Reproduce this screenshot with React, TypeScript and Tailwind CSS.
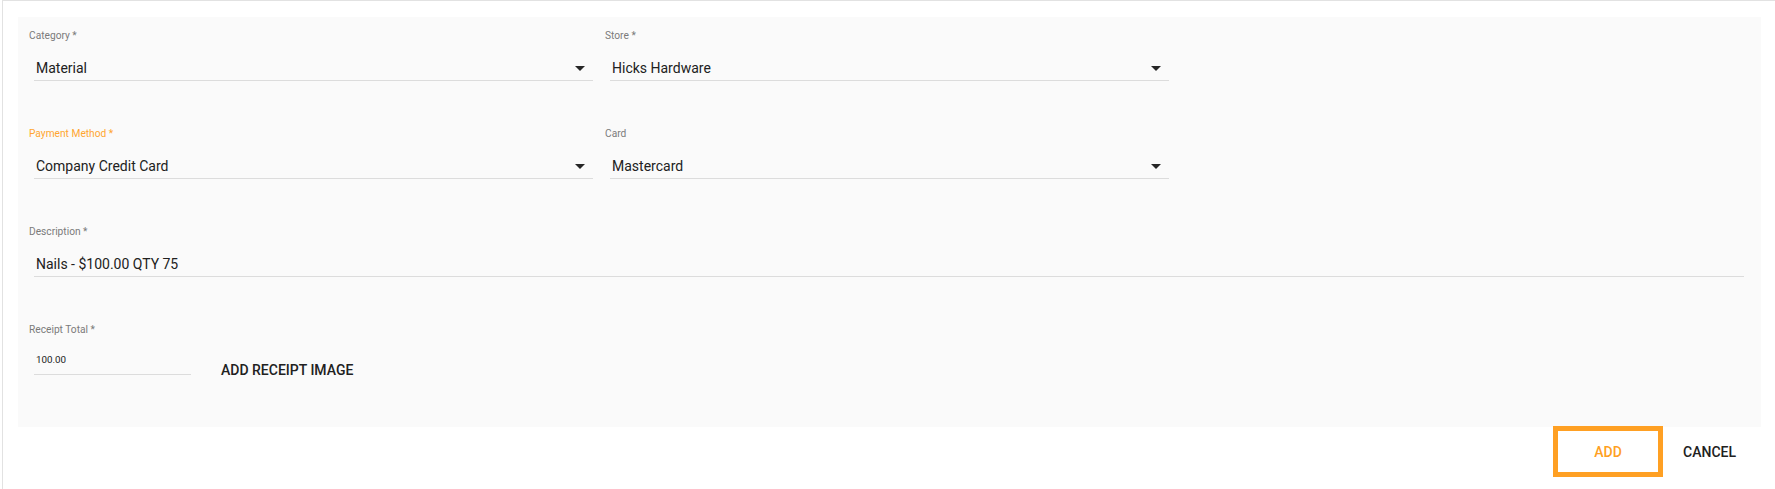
import type { ReactNode } from "react";

const fontStack = "font-['Roboto','Liberation_Sans',sans-serif]";

function DropArrow() {
  return (
    <svg width="10" height="5" viewBox="0 0 10 5" aria-hidden="true" className="shrink-0">
      <path d="M0 0 L5 5 L10 0 Z" fill="#262626" />
    </svg>
  );
}

function Field({
  label,
  accent = false,
  children,
  inputClass = "",
}: {
  label: string;
  accent?: boolean;
  children: ReactNode;
  inputClass?: string;
}) {
  return (
    <div className="flex flex-col">
      <label
        className={`text-[10.2px] leading-[12px] ${accent ? "text-[#ffa630]" : "text-[#7a7a7a]"}`}
      >
        {label}
      </label>
      <div
        className={`mt-[16px] ml-[5px] flex h-[23px] border-b border-[#dcdcdc] pl-[2px] ${inputClass}`}
      >
        {children}
      </div>
    </div>
  );
}

function SelectField({ label, value, accent }: { label: string; value: string; accent?: boolean }) {
  return (
    <Field label={label} accent={accent} inputClass="items-start justify-between pr-[8px]">
      <span className="text-[14px] leading-[20px] text-[#212121]">{value}</span>
      <span className="mt-[8px]">
        <DropArrow />
      </span>
    </Field>
  );
}

export default function App() {
  return (
    <div className={`min-h-[489px] bg-white ${fontStack}`}>
      <div className="ml-[2px] min-h-[489px] border-l border-t border-[#e2e2e2] pl-[15px] pt-[16px]">
        <div className="mr-[14px] flex flex-col gap-[47px] bg-[#fafafa] pb-[47px] pl-[11px] pr-[17px] pt-[13px]">
          <div className="grid grid-cols-[564px_564px] gap-x-[12px]">
            <SelectField label="Category *" value="Material" />
            <SelectField label="Store *" value="Hicks Hardware" />
          </div>

          <div className="grid grid-cols-[564px_564px] gap-x-[12px]">
            <SelectField label="Payment Method *" value="Company Credit Card" accent />
            <SelectField label="Card" value="Mastercard" />
          </div>

          <Field label="Description *" inputClass="items-start">
            <span className="text-[14px] leading-[20px] text-[#212121]">Nails - $100.00 QTY 75</span>
          </Field>

          <div className="flex items-start">
            <div className="w-[162px]">
              <Field label="Receipt Total *" inputClass="items-start">
                <span className="text-[9.8px] leading-[16px] text-[#212121]">100.00</span>
              </Field>
            </div>
            <button
              type="button"
              className="ml-[30px] mt-[36px] text-[14px] font-medium leading-[20px] text-[#212121]"
            >
              ADD RECEIPT IMAGE
            </button>
          </div>
        </div>

        <div className="flex items-center justify-end gap-[20px] pr-[39px]">
          <button
            type="button"
            className="-mt-[1px] flex h-[51px] w-[110px] items-center justify-center border-[5px] border-[#ffa023] text-[14px] font-medium leading-[20px] text-[#ffa023]"
          >
            ADD
          </button>
          <button type="button" className="text-[14px] font-medium leading-[20px] text-[#212121]">
            CANCEL
          </button>
        </div>
      </div>
    </div>
  );
}
